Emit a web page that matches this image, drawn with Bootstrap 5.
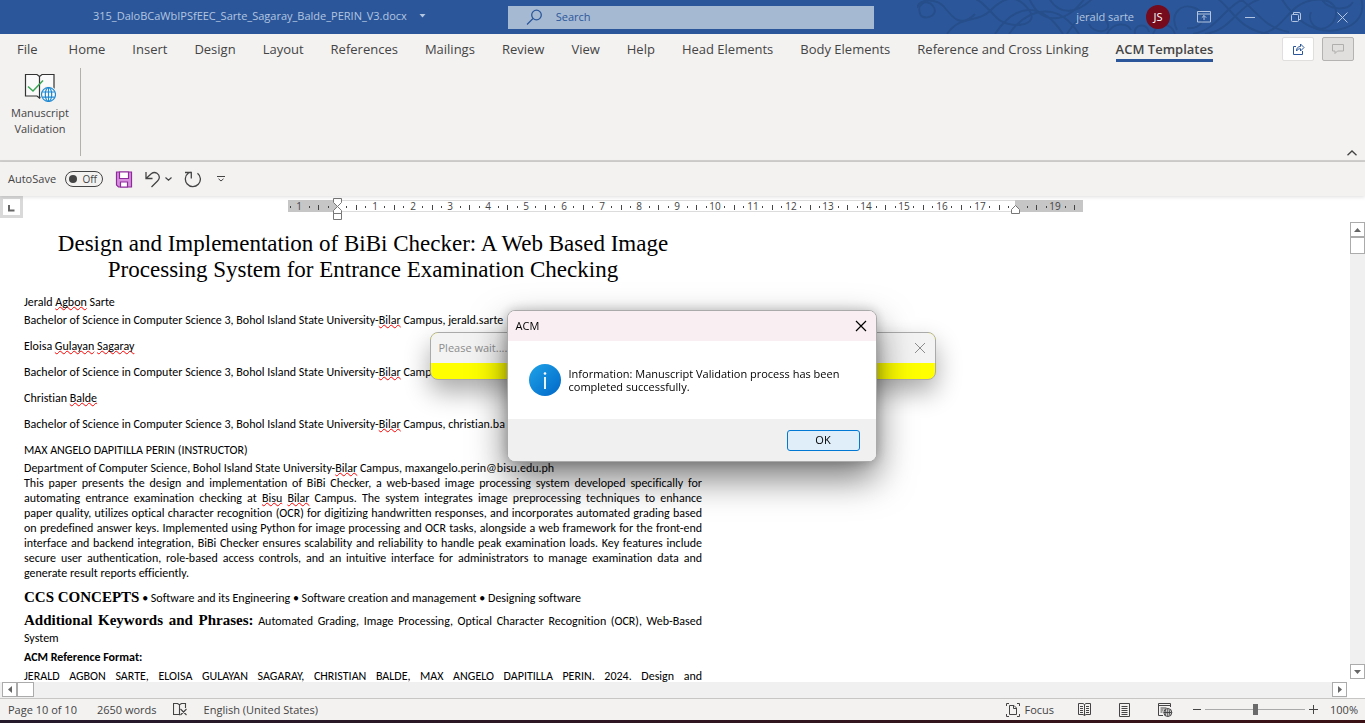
<!DOCTYPE html>
<html lang="en">
<head>
<meta charset="utf-8">
<meta name="viewport" content="width=device-width, initial-scale=1">
<title>315_DaloBCaWbIPSfEEC_Sarte_Sagaray_Balde_PERIN_V3.docx</title>
<link href="https://cdn.jsdelivr.net/npm/bootstrap@5.3.0/dist/css/bootstrap.min.css" rel="stylesheet">
<style>
:root{--word-blue:#2b579a;--chrome:#f3f2f1;--ink:#444}
body{font-family:"Open Sans","Noto Sans",sans-serif;font-size:11px;line-height:16px;color:var(--ink);background:#fff}
svg{display:block;flex:none}
.plain{background:none;border:0;padding:0;color:inherit;display:flex;align-items:center;justify-content:center}
/* title bar */
.titlebar{height:34px;background:var(--word-blue);color:#b3c5e0}
.ornament{right:0;top:0;height:34px}
.file-side{flex:0 0 37.2%;padding-left:93px;padding-bottom:2px}
.search-box{flex:0 0 26.8%;height:23px;background:#a6b9d3;color:var(--word-blue)}
.search-box input{background:none;border:0;outline:0;font-size:11px;padding:0;color:inherit}
.search-box input::placeholder{color:var(--word-blue);opacity:1}
.avatar{width:24px;height:24px;background:#750b1c;color:#fff;margin-right:11px}
.win-btn{width:46px;height:32px}
/* ribbon */
.tabs{height:34px;background:var(--chrome);font-size:13px;padding-left:17px}
.tabs nav{gap:27px}
.tabs nav a{color:var(--ink);text-decoration:none;height:28px;padding-top:6px;line-height:18px;white-space:nowrap}
.tabs nav a.current{font-weight:600;border-bottom:3px solid var(--word-blue)}
.tab-tools{padding:3px 11px 0 0}
.tool-btn{width:32px;height:24px;border:1px solid #e1dfdd;border-radius:2px;background:#fff}
.tool-btn.off{background:#e1dfdd;border-color:#b5b3b1}
.ribbon{height:94px;background:var(--chrome);border-bottom:2px solid #d2d0ce}
.ribbon-group{width:81px;height:88px;border-right:1px solid #b3b0ad}
.ribbon-group button{font-size:11px;line-height:16px;width:100%;padding-top:5px;gap:2px}
/* quick access */
.quick{height:34px;background:var(--chrome);padding-left:8px;box-shadow:0 1px 4px #0002;z-index:1}
.pill{width:38px;height:16px;border:1px solid var(--ink);border-radius:8px;font-size:10px;line-height:14px;padding:0 5px 0 3px;margin-left:9px}
.pill input{appearance:none;width:8px;height:8px;border-radius:50%;background:var(--ink);margin:0}
/* workspace */
.corner{width:23px;height:22px;border:3px solid #d9d9d9;background:#fff}
.ruler text{font-size:10px;fill:#444;text-anchor:middle}
.page-text{width:678px;margin-left:24px;padding-top:11px;color:#000;font-family:Carlito,"Open Sans",sans-serif;font-size:12px;line-height:15px;font-variant-ligatures:none}
.page-text p{margin:0;white-space:nowrap}
.page-text h1{font:23px/26px "Liberation Serif",serif;margin:0 0 12px;text-align:center}
.page-text .near{margin-top:3px}
.page-text .far{margin-top:11px}
.page-text .section{margin-top:9px}
.page-text .section + .section{margin-top:7px}
.page-text .ref{margin-top:4px}
.jl{display:block;text-align-last:justify;white-space:normal;height:15px}
.jl.tall{height:18px}
.run-head{font-family:"Liberation Serif",serif;font-size:15px;font-weight:700}
.sp{text-decoration:underline wavy #f00 1px;text-decoration-skip-ink:none;text-underline-offset:0}
.vwrap{padding-top:22px}
.vbar{width:15px;margin:4px 0 3px;background:#f0f0f0}
.hbar{height:16px;background:#f0f0f0;padding-left:2px}
.sbtn{width:15px;height:15px;background:#fff;border:1px solid #ababab}
.vbar .grip{height:17px}
.hbar .grip{width:17px}
.gut{width:18px;background:#fff}
/* status */
.status{height:22px;background:var(--chrome);border-top:1px solid #c8c6c4;padding:0 7px 0 8px}
.status input[type=range]{appearance:none;width:100px;height:12px;background:linear-gradient(#aaa,#aaa) center/100% 1px no-repeat}
.status input[type=range]::-webkit-slider-thumb{appearance:none;width:5px;height:11px;background:#6a6a6a}
.strip{height:3px;background:linear-gradient(90deg,#241a2c,#3a1216)}
/* dialogs */
.dlg{position:fixed;border:1px solid #aaa;border-radius:8px;overflow:hidden}
.dlg-wait{z-index:5;left:calc(50% - 253px);top:332px;width:506px;height:48px;background:#ff0;box-shadow:0 12px 26px #0005}
.dlg-acm{z-index:6;left:calc(50% - 176px);top:310px;width:370px;color:#000;background:#fff;box-shadow:0 16px 36px #0008,0 0 12px #0003}
.dlg-head{height:30px;padding:0 9px 0 8px}
.dlg-wait .dlg-head{background:#f3f3f3;color:#8c8c8c}
.dlg-acm .dlg-head{background:#f9eff3}
.dlg-body{height:78px;padding-left:21px;line-height:13px}
.dlg-foot{height:42px;background:#f0f0f0;padding-right:16px}
.ok-btn{width:73px;height:21px;border:1px solid #0078d4;border-radius:3px;background:#e0eef9;padding:0;color:#000}
</style>
</head>
<body class="d-flex flex-column vh-100 overflow-hidden">

<header class="titlebar d-flex align-items-center position-relative flex-shrink-0">
  <svg class="ornament position-absolute" width="448" height="34" viewBox="0 0 448 34" fill="none" stroke="#264e8b" stroke-width="2">
    <path d="M0 8C2-2 20-2 28 8S44 28 58 14M4 16C-2 4 10-2 16 6S12 20 4 16M30 34C44 14 60 24 74 10S100-6 112 10 92 30 80 18 66 2 56-2M78 34C98 4 124 0 146 34M92 34C112 6 142 2 162 34M112-2C122 22 146 28 168-2M132-2C142 16 160 14 176-2M150 34C166 8 184 10 190 22S176 34 172 24"/>
    <path d="M190 34C196 22 210 22 214 30M218 34C216 24 230 22 232 32M236 34C240 22 254 22 258 34M260 30C252 14 264 2 278 8S286 30 270 28M276 34C300 30 306 8 328-2M288 34C316 30 318 6 346-2M300-2C316 10 322 30 352 34M322-2C338 8 346 28 372 32M344 34C370 28 370 4 396 0S424 18 412 26 390 22 394 12M364-2C378 20 396 34 420 30S448 10 444-2M404-2C410 10 430 12 436 2"/>
  </svg>
  <div class="file-side d-flex align-items-center">
    <span class="text-nowrap">315_DaloBCaWbIPSfEEC_Sarte_Sagaray_Balde_PERIN_V3.docx</span>
    <button class="plain ms-2 ps-1" aria-label="File menu"><svg width="7" height="4" viewBox="0 0 7 4"><path d="M0.500 0h6L3.500 3.500z" fill="currentColor"/></svg></button>
  </div>
  <label class="search-box d-flex align-items-center position-relative">
    <svg class="ms-3 me-2" width="24" height="17" viewBox="0 0 24 17" fill="none" stroke="currentColor" stroke-width="1.300"><circle cx="12.500" cy="6" r="4.800"/><path d="M9 9.500L3 15.500"/></svg>
    <input type="text" class="flex-fill" placeholder="Search" aria-label="Search">
  </label>
  <div class="d-flex align-items-center justify-content-end flex-fill position-relative">
    <span class="me-2">jerald sarte</span>
    <span class="avatar rounded-circle d-flex align-items-center justify-content-center ms-1">JS</span>
    <button class="plain win-btn" aria-label="Ribbon display"><svg width="14" height="12" viewBox="0 0 14 12" fill="none" stroke="currentColor"><path d="M.5 .5h13v10.500H.5zM.5 3h13M7 9V4.500M4.800 6.700L7 4.500l2.200 2.200"/></svg></button>
    <button class="plain win-btn" aria-label="Minimize"><svg width="10" height="11" viewBox="0 0 10 11" stroke="currentColor"><path d="M0 5.500h10"/></svg></button>
    <button class="plain win-btn" aria-label="Restore"><svg width="10" height="10" viewBox="0 0 10 10" fill="none" stroke="currentColor"><rect x=".5" y="2.500" width="7" height="7" rx="1"/><path d="M2.500 2.500V.5h5.500q1.500 0 1.500 1.500v5.500h-2"/></svg></button>
    <button class="plain win-btn" aria-label="Close"><svg width="11" height="11" viewBox="0 0 11 11" stroke="currentColor"><path d="M.5 .5l10 10M10.500 .5l-10 10"/></svg></button>
  </div>
</header>

<div class="tabs d-flex flex-shrink-0">
  <nav class="d-flex">
    <a href="#" class="me-1">File</a><a href="#">Home</a><a href="#">Insert</a><a href="#">Design</a><a href="#">Layout</a><a href="#">References</a><a href="#">Mailings</a><a href="#">Review</a><a href="#">View</a><a href="#">Help</a><a href="#">Head Elements</a><a href="#">Body Elements</a><a href="#">Reference and Cross Linking</a><a href="#" class="current">ACM Templates</a>
  </nav>
  <div class="tab-tools d-flex gap-2 ms-auto">
    <button class="plain tool-btn" aria-label="Share"><svg width="13" height="12" viewBox="0 0 13 12" fill="none" stroke="#2b579a"><path d="M4 3.500H1.500v8h9V8M4.500 8C4.500 5 6 3.500 8.500 3.500V1L12 4.500 8.500 8V5.700C6.500 5.700 5.500 6.500 4.500 8z"/></svg></button>
    <button class="plain tool-btn off" aria-label="Comments"><svg width="12" height="11" viewBox="0 0 12 11" fill="none" stroke="#b0aeac"><path d="M.5 .5h11v6.500H5.500L3 9.500V7H.5z"/></svg></button>
  </div>
</div>

<div class="ribbon d-flex justify-content-between flex-shrink-0">
  <div class="ribbon-group">
    <button class="plain flex-column">
      <svg width="32" height="30" viewBox="0 0 32 30" fill="none">
        <path d="M1.500 1.500h11.500l2.500 2 2.500-2h12v21.500H18l-2.500 2-2.500-2H1.500z" fill="#fafafa" stroke="#333" stroke-width="1.200"/>
        <path d="M15.500 3.500v22" stroke="#333" stroke-width="1.200"/>
        <path d="M4 13.500l5 4.500L19 7.500" stroke="#3aa655" stroke-width="1.500"/>
        <circle cx="24.500" cy="21.500" r="8.500" fill="#f3f2f1"/>
        <g stroke="#1e88d0" stroke-width="1.200"><circle cx="24.500" cy="21.500" r="7" fill="#fff"/><ellipse cx="24.500" cy="21.500" rx="3.200" ry="7"/><path d="M24.500 14.500v14M18.300 19h12.400M18.300 24.200h12.400"/></g>
      </svg>
      <span>Manuscript<br>Validation</span>
    </button>
  </div>
  <button class="plain align-self-end me-2 pb-1" aria-label="Collapse ribbon"><svg width="10" height="6" viewBox="0 0 10 6" fill="none" stroke="#444" stroke-width="1.300"><path d="M.5 5.300L5 1l4.500 4.300"/></svg></button>
</div>

<div class="quick d-flex align-items-center flex-shrink-0 position-relative">
  <label for="autosave">AutoSave</label>
  <label class="pill d-flex align-items-center justify-content-between"><input type="checkbox" id="autosave" role="switch">Off</label>
  <button class="plain ms-2 ps-1" aria-label="Save"><svg width="18" height="17" viewBox="0 0 18 17"><path d="M1.500 1h15v15H3.500l-2-2z" fill="#d58fdc" stroke="#8f2a9c" stroke-width="1.200"/><path d="M4.500 1h9v6.500h-9zM5.500 11h7v5h-7z" fill="#fff" stroke="#8f2a9c" stroke-width="1.200"/></svg></button>
  <button class="plain ms-2 ps-1" aria-label="Undo"><svg width="16" height="17" viewBox="0 0 16 17" fill="none" stroke="#444" stroke-width="1.300"><path d="M1 1v6.500h6.500M1.300 7.200L6.500 2.600C10-.2 15 3 14.200 7.200 14 8.400 13.500 9 12.500 10L6.500 16"/></svg></button>
  <button class="plain ms-1" aria-label="Undo list"><svg width="7" height="4" viewBox="0 0 7 4" fill="none" stroke="#444" stroke-width="1.200"><path d="M.5 .5l3 2.700 3-2.700"/></svg></button>
  <button class="plain ms-2 ps-1" aria-label="Redo"><svg width="17" height="17" viewBox="0 0 17 17" fill="none" stroke="#444" stroke-width="1.300"><path d="M13.500 2.200A7.500 7.500 0 1 1 4.500 2L7 1M1 1.500h6.300V7.500"/></svg></button>
  <button class="plain ms-3" aria-label="Customize toolbar"><svg width="8" height="6" viewBox="0 0 8 6" fill="none" stroke="#444"><path d="M0 .5h8M1.500 2.800L4 5l2.500-2.200"/></svg></button>
</div>

<div class="d-flex flex-fill overflow-hidden">
  <main class="flex-fill overflow-hidden bg-white">
    <div class="d-flex">
      <div class="corner"><svg width="17" height="16" viewBox="0 0 17 16"><path d="M6 6v5.500h5.500" fill="none" stroke="#666" stroke-width="2"/></svg></div>
      <svg class="ruler" id="ruler" width="1080" height="24"></svg>
    </div>
    <article class="page-text">
      <h1>Design and Implementation of BiBi Checker: A Web Based Image<br>Processing System for Entrance Examination Checking</h1>
      <p>Jerald <span class="sp">Agbon</span> Sarte</p>
      <p class="near">Bachelor of Science in Computer Science 3, Bohol Island State University-<span class="sp">Bilar</span> Campus, jerald.sarte</p>
      <p class="far">Eloisa <span class="sp">Gulayan</span> <span class="sp">Sagaray</span></p>
      <p class="far">Bachelor of Science in Computer Science 3, Bohol Island State University-<span class="sp">Bilar</span> Campus,</p>
      <p class="far">Christian <span class="sp">Balde</span></p>
      <p class="far">Bachelor of Science in Computer Science 3, Bohol Island State University-<span class="sp">Bilar</span> Campus, christian.ba</p>
      <p class="far">MAX ANGELO DAPITILLA PERIN (INSTRUCTOR)</p>
      <p class="near">Department of Computer Science, Bohol Island State University-<span class="sp">Bilar</span> Campus, maxangelo.perin@bisu.edu.ph</p>
      <p><span class="jl">This paper presents the design and implementation of BiBi Checker, a web-based image processing system developed specifically for</span>
      <span class="jl">automating entrance examination checking at <span class="sp">Bisu</span> <span class="sp">Bilar</span> Campus. The system integrates image preprocessing techniques to enhance</span>
      <span class="jl">paper quality, utilizes optical character recognition (OCR) for digitizing handwritten responses, and incorporates automated grading based</span>
      <span class="jl">on predefined answer keys. Implemented using Python for image processing and OCR tasks, alongside a web framework for the front-end</span>
      <span class="jl">interface and backend integration, BiBi Checker ensures scalability and reliability to handle peak examination loads. Key features include</span>
      <span class="jl">secure user authentication, role-based access controls, and an intuitive interface for administrators to manage examination data and</span>
      generate result reports efficiently.</p>
      <p class="section"><span class="run-head">CCS CONCEPTS</span> • Software and its Engineering • Software creation and management • Designing software</p>
      <p class="section"><span class="jl tall"><span class="run-head">Additional Keywords and Phrases:</span> Automated Grading, Image Processing, Optical Character Recognition (OCR), Web-Based</span>
      System</p>
      <p class="ref"><b>ACM Reference Format:</b></p>
      <p class="ref"><span class="jl">JERALD AGBON SARTE, ELOISA GULAYAN SAGARAY, CHRISTIAN BALDE, MAX ANGELO DAPITILLA PERIN. 2024. Design and</span></p>
    </article>
  </main>
  <div class="vwrap d-flex">
    <div class="vbar d-flex flex-column">
      <button class="plain sbtn" aria-label="Scroll up"><svg width="7" height="4" viewBox="0 0 7 4"><path d="M0 4L3.500 0 7 4z" fill="#666"/></svg></button>
      <div class="sbtn grip"></div>
      <button class="plain sbtn mt-auto" aria-label="Scroll down"><svg width="7" height="4" viewBox="0 0 7 4"><path d="M0 0l3.500 4L7 0z" fill="#666"/></svg></button>
    </div>
  </div>
</div>

<div class="d-flex flex-shrink-0">
  <div class="hbar d-flex flex-fill">
    <button class="plain sbtn" aria-label="Scroll left"><svg width="4" height="7" viewBox="0 0 4 7"><path d="M4 0L0 3.500 4 7z" fill="#666"/></svg></button>
    <div class="sbtn grip"></div>
    <button class="plain sbtn ms-auto" aria-label="Scroll right"><svg width="4" height="7" viewBox="0 0 4 7"><path d="M0 0l4 3.500L0 7z" fill="#666"/></svg></button>
  </div>
  <div class="gut"></div>
</div>

<footer class="status d-flex align-items-center flex-shrink-0">
  <span>Page 10 of 10</span>
  <span class="ms-3 ps-1">2650 words</span>
  <button class="plain ms-3 me-3" aria-label="Proofing"><svg width="15" height="13" viewBox="0 0 15 13" fill="none" stroke="#444" stroke-width="1.100"><path d="M6.500 11.500H.5V.5h4l2 1.300v10.500M6.500 1.800l2-1.300h4V5M7.500 6l6 6M13.500 6l-6 6"/></svg></button>
  <span>English (United States)</span>
  <div class="d-flex align-items-center ms-auto">
    <button class="plain"><svg class="me-1" width="14" height="14" viewBox="0 0 14 14" fill="none" stroke="#444"><path d="M.5 3V.5H3M11 .5h2.500V3M13.500 11v2.500H11M3 13.500H.5V11M3.500 2.500H8L10.500 5v6.500h-7zM7.500 2.500V5.500h3"/></svg>Focus</button>
    <button class="plain ms-4" aria-label="Read mode"><svg width="13" height="13" viewBox="0 0 13 13" fill="none" stroke="#444"><path d="M6.500 1.500L5 .5H.5v11H5l1.500 1 1.500-1h4.500V.5H8zM6.500 1.500v11M2 3.500h3M2 5.500h3M2 7.500h3M2 9.500h3M8 3.500h3M8 5.500h3M8 7.500h3M8 9.500h3"/></svg></button>
    <button class="plain ms-4 ps-1" aria-label="Print layout"><svg width="11" height="14" viewBox="0 0 11 14" fill="none" stroke="#444"><path d="M.5 .5h10v13H.5zM2.500 3.500h6M2.500 5.500h6M2.500 7.500h6M2.500 9.500h6M2.500 11.500h6"/></svg></button>
    <button class="plain ms-4 ps-1" aria-label="Web layout"><svg width="15" height="14" viewBox="0 0 15 14" fill="none" stroke="#444"><path d="M5 12.500H.5V.5h12V4M.5 2.500h12M2.500 5h6M2.500 7h3M2.500 9h2"/><circle cx="9.800" cy="9.500" r="4"/><path d="M5.800 9.500h8M9.800 5.500v8M7.500 6.500q1 3 0 6M12 6.500q-1 3 0 6"/></svg></button>
    <button class="plain ms-3" aria-label="Zoom out"><svg class="mx-1" width="8" height="9" viewBox="0 0 8 9" stroke="#444"><path d="M0 4.500h8"/></svg></button>
    <input type="range" aria-label="Zoom" min="0" max="200" value="100">
    <button class="plain ms-1" aria-label="Zoom in"><svg width="9" height="9" viewBox="0 0 9 9" stroke="#444"><path d="M0 4.500h9M4.500 0v9"/></svg></button>
    <span class="ms-2 ps-1">100%</span>
  </div>
</footer>
<div class="strip flex-shrink-0"></div>

<div class="dlg dlg-wait">
  <div class="dlg-head d-flex align-items-center justify-content-between">Please wait....
    <button class="plain" aria-label="Close"><svg width="12" height="12" viewBox="0 0 12 12" stroke="currentColor"><path d="M1 1l10 10M11 1L1 11"/></svg></button></div>
</div>
<div class="dlg dlg-acm" role="dialog" aria-label="ACM">
  <div class="dlg-head d-flex align-items-center justify-content-between">ACM
    <button class="plain" aria-label="Close"><svg width="12" height="12" viewBox="0 0 12 12" stroke="#000" stroke-width="1.200"><path d="M1 1l10 10M11 1L1 11"/></svg></button></div>
  <div class="dlg-body d-flex align-items-center">
    <svg width="32" height="32" viewBox="0 0 32 32"><defs><linearGradient id="ib" x1="0" y1="0" x2="1" y2="1"><stop offset="0" stop-color="#1fa3e8"/><stop offset="1" stop-color="#0067c8"/></linearGradient></defs><circle cx="16" cy="16" r="16" fill="url(#ib)"/><circle cx="16" cy="9.500" r="1.300" fill="#fff"/><path d="M16 13v12" stroke="#fff" stroke-width="1.800"/></svg>
    <div class="text-nowrap ps-2">Information: Manuscript Validation process has been<br>completed successfully.</div>
  </div>
  <div class="dlg-foot d-flex align-items-center justify-content-end"><button class="ok-btn">OK</button></div>
</div>

<script src="https://cdn.jsdelivr.net/npm/bootstrap@5.3.0/dist/js/bootstrap.bundle.min.js"></script>
<script>
// Ruler: zero point, centimetre step and page edges, in ruler units
const zero=314, step=37.8, first=265, last=1060, edge=992;
let s=`<rect x="${first}" y="4" width="${last-first}" height="12" fill="#c6c6c6"/><rect x="${zero}" y="5" width="${edge-zero}" height="10" fill="#fff"/><path d="M${zero} 4.500H${edge}M${zero} 15.500H${edge}" stroke="#dcdcdc"/>`;
for(let q=-5;q<=78;q++){
  const x=Math.round(zero+q*step/4);
  if(q===0||Math.abs(q-72)<1)continue;
  if(q%4===0)s+=`<text x="${x}" y="14">${Math.abs(q/4)}</text>`;
  else if(q%2===0)s+=`<rect x="${x}" y="9" width="1" height="5" fill="#444"/>`;
  else s+=`<rect x="${x}" y="10" width="1" height="2" fill="#444"/>`;
}
s+=`<g fill="#fff" stroke="#777"><path d="M310.500 2.500h8v4l-4 4-4-4zM310.500 17.500v-3l4-4 4 4v3zM310.500 17.500h8v6h-8z"/><path d="M988.500 17.500v-4l4-4 4 4v4z"/></g>`;
document.getElementById('ruler').innerHTML=s;
</script>
</body>
</html>
